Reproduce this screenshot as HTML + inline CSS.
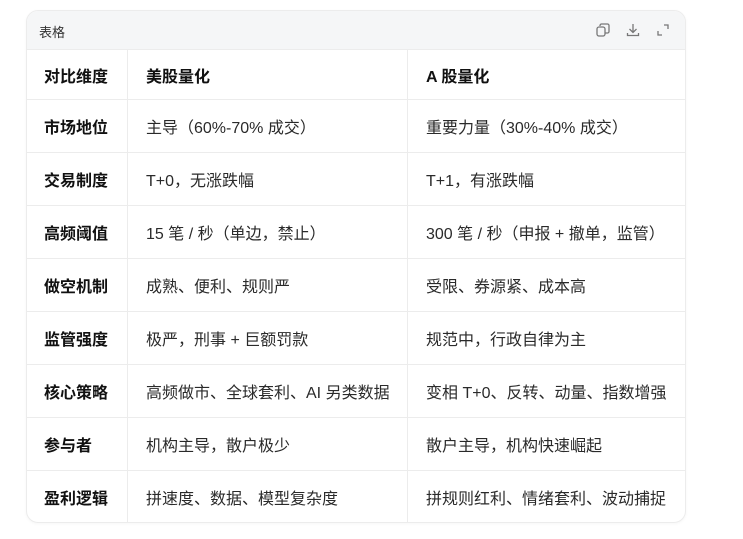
<!DOCTYPE html>
<html><head><meta charset="utf-8"><style>
body{margin:0;background:#fff;font-family:"Liberation Sans","Noto Sans CJK SC",sans-serif;}
.card{position:absolute;left:26px;top:10px;width:658px;height:511px;border:1px solid #ececec;border-radius:12px;overflow:hidden;box-shadow:0 1px 3px rgba(0,0,0,0.04);}
.hd{height:38px;background:#f5f6f7;position:relative;}
.hd span{position:absolute;left:12px;top:11px;font-size:13px;color:#333;}
.icons{position:absolute;right:14px;top:11px;display:flex;gap:14px;}
table{border-collapse:collapse;width:100%;font-size:16px;color:#2a2a2a;table-layout:fixed;}
td{border-top:1px solid #ececec;height:52px;padding:0;vertical-align:middle;white-space:nowrap;}
td.c1{width:83px;padding-left:17px;font-weight:bold;font-size:16px;color:#111;border-right:1px solid #ececec;}
td.c2{width:261px;padding-left:18px;border-right:1px solid #ececec;}
td.c3{padding-left:18px;}
tr.h td{height:49px;font-weight:bold;font-size:16px;color:#111;}
</style></head><body>
<div class="card">
<div class="hd"><span>表格</span>
<div class="icons">
<svg width="16" height="16" viewBox="0 0 16 16" fill="none" stroke="#777" stroke-width="1.3"><rect x="2" y="5" width="8" height="9" rx="2"/><path d="M5 4V3.5A1.5 1.5 0 0 1 6.5 2H12.5A1.5 1.5 0 0 1 14 3.5V9.5A1.5 1.5 0 0 1 12.5 11H10"/></svg>
<svg width="16" height="16" viewBox="0 0 16 16" fill="none" stroke="#777" stroke-width="1.3"><path d="M8 2v8M4.5 7 8 10.5 11.5 7M2.5 11v2.5h11V11"/></svg>
<svg width="16" height="16" viewBox="0 0 16 16" fill="none" stroke="#777" stroke-width="1.3"><path d="M9 3h4v4M7 13H3V9"/></svg>
</div></div>
<table>
<tr class="h"><td class="c1">对比维度</td><td class="c2">美股量化</td><td class="c3">A 股量化</td></tr>
<tr><td class="c1">市场地位</td><td class="c2">主导（60%-70% 成交）</td><td class="c3">重要力量（30%-40% 成交）</td></tr>
<tr><td class="c1">交易制度</td><td class="c2">T+0，无涨跌幅</td><td class="c3">T+1，有涨跌幅</td></tr>
<tr><td class="c1">高频阈值</td><td class="c2">15 笔 / 秒（单边，禁止）</td><td class="c3">300 笔 / 秒（申报 + 撤单，监管）</td></tr>
<tr><td class="c1">做空机制</td><td class="c2">成熟、便利、规则严</td><td class="c3">受限、券源紧、成本高</td></tr>
<tr><td class="c1">监管强度</td><td class="c2">极严，刑事 + 巨额罚款</td><td class="c3">规范中，行政自律为主</td></tr>
<tr><td class="c1">核心策略</td><td class="c2">高频做市、全球套利、AI 另类数据</td><td class="c3">变相 T+0、反转、动量、指数增强</td></tr>
<tr><td class="c1">参与者</td><td class="c2">机构主导，散户极少</td><td class="c3">散户主导，机构快速崛起</td></tr>
<tr><td class="c1">盈利逻辑</td><td class="c2">拼速度、数据、模型复杂度</td><td class="c3">拼规则红利、情绪套利、波动捕捉</td></tr>
</table>
</div>
</body></html>
